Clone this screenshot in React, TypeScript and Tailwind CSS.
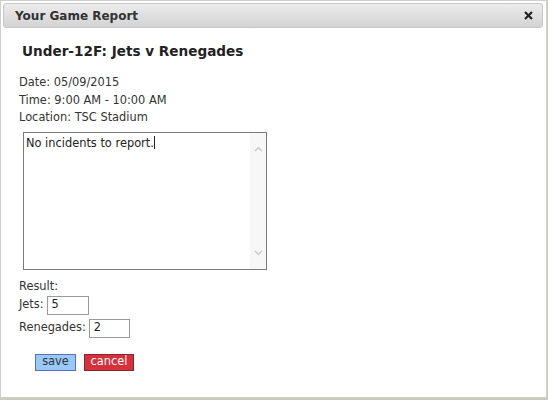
import React from 'react';

const font = { fontFamily: '"DejaVu Sans", Verdana, sans-serif' };

const Chevron: React.FC<{ up?: boolean }> = ({ up }) => (
  <svg width="9" height="6" viewBox="0 0 9 6" fill="none">
    <path
      d={up ? 'M1 5 L4.5 1.5 L8 5' : 'M1 1 L4.5 4.5 L8 1'}
      stroke="#c4c4c4"
      strokeWidth="1.2"
    />
  </svg>
);

const App: React.FC = () => {
  return (
    <div className="w-[548px] h-[400px] bg-[#c9ccb8] overflow-hidden" style={font}>
      <div className="w-[547px] h-[398px] bg-white border border-[#cfcfcf] p-[2px]">
        {/* title bar */}
        <div className="h-[25px] mr-[1px] flex items-center justify-between rounded-[3px] border border-[#c6c6c6] bg-gradient-to-b from-[#ececec] to-[#d3d3d3] pl-[11px] pr-[8px]">
          <span className="text-[12px] font-bold text-[#333]">Your Game Report</span>
          <svg width="9" height="9" viewBox="0 0 9 9" className="mr-[1px]">
            <path d="M1 1 L8 8 M8 1 L1 8" stroke="#222" strokeWidth="2.2" />
          </svg>
        </div>

        <div className="pl-[16px] text-[11.4px] text-[#333]">
          <h1 className="mt-[13px] ml-[3px] text-[13.6px] font-bold text-[#222] leading-[20px]">
            Under-12F: Jets v Renegades
          </h1>

          <div className="mt-[13px] leading-[17.5px]">
            <div>Date: 05/09/2015</div>
            <div>Time: 9:00 AM - 10:00 AM</div>
            <div>Location: TSC Stadium</div>
          </div>

          {/* textarea */}
          <div className="mt-[5px] ml-[4px] w-[244px] h-[138px] border border-[#7a7a7a] flex">
            <div className="flex-1 pl-[2px] pt-[2px] text-[#222]">
              No incidents to report.<span className="inline-block w-[1px] h-[13px] bg-[#222] align-middle -mt-[2px]" />
            </div>
            <div className="w-[16px] bg-[#f7f7f7] flex flex-col items-center justify-between py-[13px]">
              <Chevron up />
              <Chevron />
            </div>
          </div>

          <div className="mt-[9px] leading-[14px]">Result:</div>
          <div className="mt-[3px] flex items-center gap-[3px]">
            <span>Jets:</span>
            <div className="w-[42px] h-[19px] border border-[#9a9a9a] px-[4px] flex items-center text-[#222]">5</div>
          </div>
          <div className="mt-[4px] flex items-center gap-[3px]">
            <span>Renegades:</span>
            <div className="w-[41px] h-[19px] border border-[#9a9a9a] px-[4px] flex items-center text-[#222]">2</div>
          </div>

          <div className="mt-[16px] ml-[16px] flex gap-[8px]">
            <div className="w-[41px] h-[17px] border border-[#5b6fb5] bg-[#99c9fb] flex items-center justify-center text-[#333] leading-none">
              save
            </div>
            <div className="w-[50px] h-[17px] border border-[#8a2430] bg-[#d6303b] flex items-center justify-center text-white leading-none">
              cancel
            </div>
          </div>
        </div>
      </div>
    </div>
  );
};

export default App;
